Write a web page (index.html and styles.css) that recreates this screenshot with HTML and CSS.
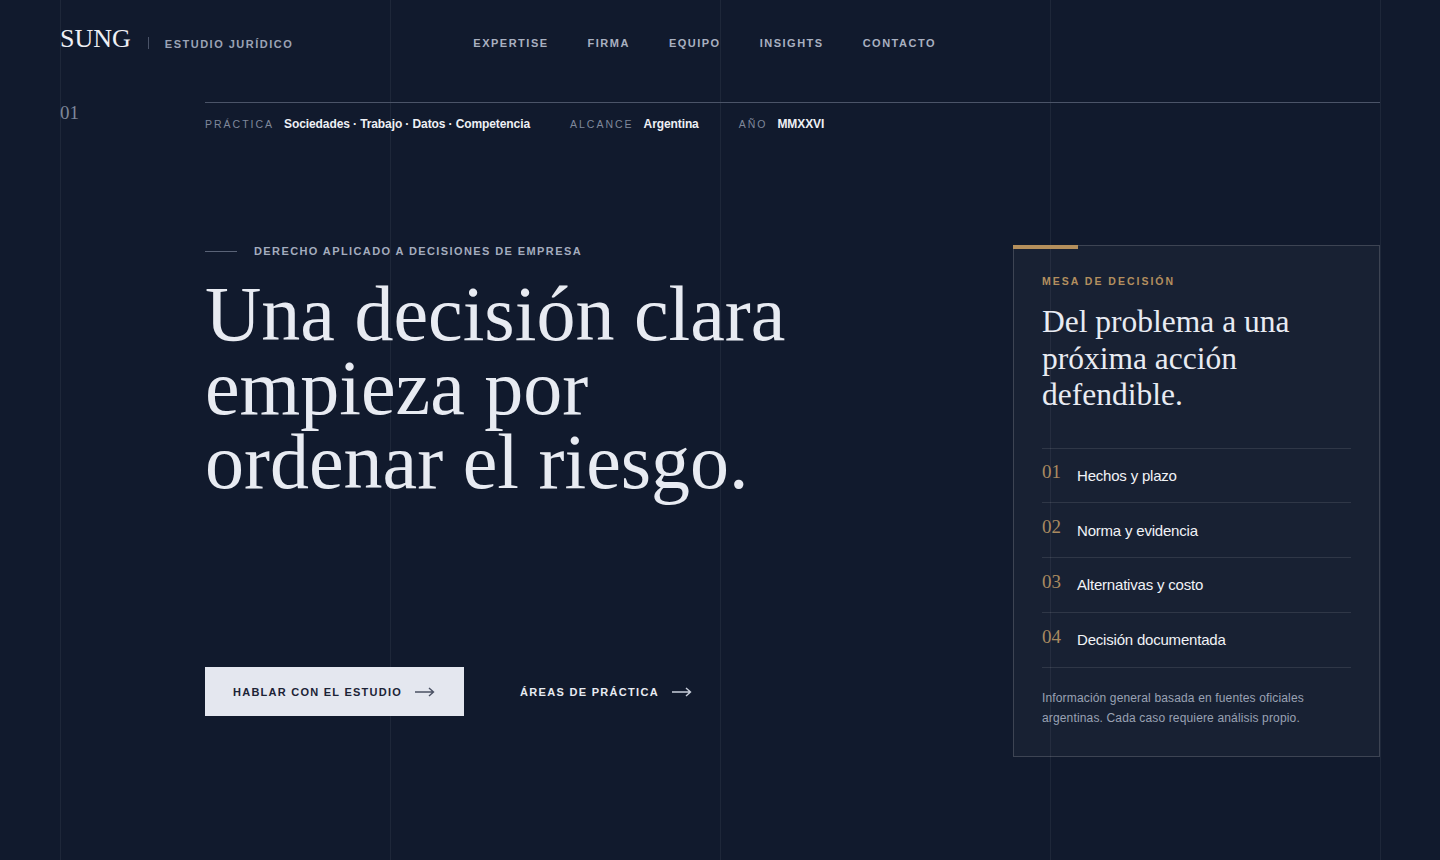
FILE: index.html
```html
<!DOCTYPE html>
<html lang="es">
<head>
<meta charset="utf-8">
<title>SUNG — Estudio Jurídico</title>
<link rel="stylesheet" href="styles.css">
</head>
<body>
<div class="page">
  <header class="top">
    <div class="brand">
      <span class="logo">SUNG</span>
      <span class="sep"></span>
      <span class="tag">ESTUDIO JURÍDICO</span>
    </div>
    <nav class="nav">
      <a href="#">EXPERTISE</a>
      <a href="#">FIRMA</a>
      <a href="#">EQUIPO</a>
      <a href="#">INSIGHTS</a>
      <a href="#">CONTACTO</a>
    </nav>
  </header>

  <div class="frame">
    <div class="index">01</div>
    <div class="main">
      <div class="meta">
        <div class="meta-item"><span class="label">PRÁCTICA</span><span class="value">Sociedades · Trabajo · Datos · Competencia</span></div>
        <div class="meta-item"><span class="label">ALCANCE</span><span class="value">Argentina</span></div>
        <div class="meta-item"><span class="label">AÑO</span><span class="value">MMXXVI</span></div>
      </div>

      <div class="hero">
        <div class="copy">
          <div class="eyebrow"><span class="dash"></span>DERECHO APLICADO A DECISIONES DE EMPRESA</div>
          <h1 class="title"><span class="line">Una decisión clara</span><span class="line">empieza por</span><span class="line">ordenar el riesgo.</span></h1>
          <div class="actions">
            <a class="btn primary" href="#">HABLAR CON EL ESTUDIO
              <svg class="arrow" width="20" height="10" viewBox="0 0 20 10"><path d="M0 5H18.5M14 1l4.5 4-4.5 4" fill="none" stroke="currentColor" stroke-width="1.4"/></svg>
            </a>
            <a class="btn ghost" href="#">ÁREAS DE PRÁCTICA
              <svg class="arrow" width="20" height="10" viewBox="0 0 20 10"><path d="M0 5H18.5M14 1l4.5 4-4.5 4" fill="none" stroke="currentColor" stroke-width="1.4"/></svg>
            </a>
          </div>
        </div>

        <aside class="card">
          <span class="accent"></span>
          <div class="card-label">MESA DE DECISIÓN</div>
          <h2 class="card-title">Del problema a una próxima acción defendible.</h2>
          <ol class="steps">
            <li><span class="num">01</span><span class="step">Hechos y plazo</span></li>
            <li><span class="num">02</span><span class="step">Norma y evidencia</span></li>
            <li><span class="num">03</span><span class="step">Alternativas y costo</span></li>
            <li><span class="num">04</span><span class="step">Decisión documentada</span></li>
          </ol>
          <p class="note">Información general basada en fuentes oficiales argentinas. Cada caso requiere análisis propio.</p>
        </aside>
      </div>
    </div>
  </div>
</div>
</body>
</html>
```

FILE: styles.css
```css
* { box-sizing: border-box; }

html, body {
  margin: 0;
  padding: 0;
}

body {
  min-height: 860px;
  background-color: #111a2d;
  background-image: linear-gradient(to right, rgba(255,255,255,0.055) 1px, transparent 1px);
  background-size: 330px 100%;
  background-position: 60px 0;
  color: #e7eaf1;
  font-family: "Liberation Sans", Arial, sans-serif;
  overflow: hidden;
}

a { color: inherit; text-decoration: none; }

.page {
  padding: 0 60px;
}

/* header */
.top {
  height: 86px;
  display: flex;
  align-items: center;
}

.brand {
  display: flex;
  align-items: center;
}

.logo {
  font-family: "Liberation Serif", "Times New Roman", serif;
  font-size: 26px;
  color: #eef0f5;
  line-height: 1;
  position: relative;
  top: -4px;
}

.sep {
  width: 1px;
  height: 12px;
  background: #4a5368;
  margin: 0 16px 0 17px;
}

.tag {
  font-size: 11px;
  letter-spacing: 1.5px;
  color: #9ba3b5;
  font-weight: 600;
  position: relative;
  top: 1px;
}

.nav {
  display: flex;
  gap: 39px;
  margin-left: 180px;
}

.nav a {
  font-size: 11px;
  letter-spacing: 1.5px;
  font-weight: 600;
  color: #a9b0c0;
}

/* frame */
.frame {
  display: grid;
  grid-template-columns: 145px 1fr;
  margin-top: 16px;
}

.index {
  font-family: "Liberation Serif", "Times New Roman", serif;
  font-size: 19px;
  line-height: 22px;
  color: #7e879a;
}

.meta {
  border-top: 1px solid #4b5468;
  padding-top: 11px;
  display: flex;
  gap: 40px;
  line-height: 20px;
}

.meta-item {
  display: flex;
  align-items: baseline;
  gap: 10px;
}

.label {
  font-size: 10.5px;
  letter-spacing: 2px;
  color: #7f889b;
}

.value {
  font-size: 12px;
  font-weight: 700;
  color: #eef0f5;
  letter-spacing: -0.1px;
}

/* hero */
.hero {
  margin-top: 111px;
  display: grid;
  grid-template-columns: 1fr 367px;
  align-items: start;
}

.eyebrow {
  display: flex;
  align-items: center;
  font-size: 11px;
  line-height: 13px;
  letter-spacing: 1.4px;
  font-weight: 600;
  color: #a4acbe;
}

.dash {
  width: 32px;
  height: 1px;
  background: #5a6377;
  margin-right: 17px;
}

.title {
  margin: 19px 0 0;
  font-family: "Liberation Serif", "Times New Roman", serif;
  font-weight: 400;
  font-size: 78px;
  line-height: 74px;
  color: #e8ebf2;
}

.title .line {
  display: block;
  height: 74px;
}

.actions {
  margin-top: 168px;
  display: flex;
  align-items: center;
  gap: 56px;
}

.btn {
  display: inline-flex;
  align-items: center;
  gap: 13px;
  font-size: 11px;
  font-weight: 600;
  letter-spacing: 1.25px;
}

.btn.primary {
  height: 49px;
  padding: 0 29px 0 28px;
  background: #e4e7ef;
  color: #1c2336;
}

.btn.primary .arrow { color: #4a5163; }

.btn.ghost {
  color: #e8ebf2;
  font-weight: 700;
  letter-spacing: 1.3px;
}

.btn.ghost .arrow { color: #c9cfdb; }

/* card */
.card {
  position: relative;
  border: 1px solid rgba(255,255,255,0.16);
  background: rgba(255,255,255,0.03);
  padding: 28px 28px 28px 28px;
}

.accent {
  position: absolute;
  left: -1px;
  top: -1px;
  width: 65px;
  height: 4px;
  background: #b48f5c;
}

.card-label {
  font-size: 10.5px;
  line-height: 14px;
  letter-spacing: 2px;
  font-weight: 600;
  color: #b38f5f;
}

.card-title {
  margin: 16px 0 0;
  font-family: "Liberation Serif", "Times New Roman", serif;
  font-weight: 400;
  font-size: 31.5px;
  line-height: 36.5px;
  color: #e8ebf2;
}

.steps {
  list-style: none;
  margin: 34px 0 0;
  padding: 0;
  border-top: 1px solid rgba(255,255,255,0.1);
}

.steps li {
  height: 54.8px;
  display: flex;
  align-items: center;
  border-bottom: 1px solid rgba(255,255,255,0.1);
}

.num {
  width: 35px;
  font-family: "Liberation Serif", "Times New Roman", serif;
  font-size: 19px;
  color: #a98a60;
  position: relative;
  top: -3px;
}

.step {
  font-size: 15px;
  color: #f1f3f7;
  letter-spacing: -0.2px;
}

.note {
  margin: 20px 0 0;
  font-size: 12px;
  line-height: 20px;
  color: #9aa2b4;
  letter-spacing: 0.15px;
}
```
